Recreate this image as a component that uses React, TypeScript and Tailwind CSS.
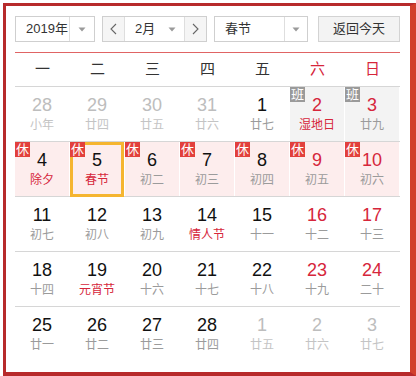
import React from 'react'

type Day = {
  n: number
  lunar: string
  muted?: boolean
  red?: boolean
  lunarRed?: boolean
  tag?: '休' | '班'
  bg?: 'pink' | 'gray'
  selected?: boolean
}

const FONT = { fontFamily: '"Liberation Sans", Arial, "Noto Sans CJK SC", sans-serif' }

const weeks: Day[][] = [
  [
    { n: 28, lunar: '小年', muted: true },
    { n: 29, lunar: '廿四', muted: true },
    { n: 30, lunar: '廿五', muted: true },
    { n: 31, lunar: '廿六', muted: true },
    { n: 1, lunar: '廿七' },
    { n: 2, lunar: '湿地日', red: true, lunarRed: true, tag: '班', bg: 'gray' },
    { n: 3, lunar: '廿九', red: true, tag: '班', bg: 'gray' },
  ],
  [
    { n: 4, lunar: '除夕', lunarRed: true, tag: '休', bg: 'pink' },
    { n: 5, lunar: '春节', lunarRed: true, tag: '休', bg: 'pink', selected: true },
    { n: 6, lunar: '初二', tag: '休', bg: 'pink' },
    { n: 7, lunar: '初三', tag: '休', bg: 'pink' },
    { n: 8, lunar: '初四', tag: '休', bg: 'pink' },
    { n: 9, lunar: '初五', red: true, tag: '休', bg: 'pink' },
    { n: 10, lunar: '初六', red: true, tag: '休', bg: 'pink' },
  ],
  [
    { n: 11, lunar: '初七' },
    { n: 12, lunar: '初八' },
    { n: 13, lunar: '初九' },
    { n: 14, lunar: '情人节', lunarRed: true },
    { n: 15, lunar: '十一' },
    { n: 16, lunar: '十二', red: true },
    { n: 17, lunar: '十三', red: true },
  ],
  [
    { n: 18, lunar: '十四' },
    { n: 19, lunar: '元宵节', lunarRed: true },
    { n: 20, lunar: '十六' },
    { n: 21, lunar: '十七' },
    { n: 22, lunar: '十八' },
    { n: 23, lunar: '十九', red: true },
    { n: 24, lunar: '二十', red: true },
  ],
  [
    { n: 25, lunar: '廿一' },
    { n: 26, lunar: '廿二' },
    { n: 27, lunar: '廿三' },
    { n: 28, lunar: '廿四' },
    { n: 1, lunar: '廿五', muted: true },
    { n: 2, lunar: '廿六', muted: true },
    { n: 3, lunar: '廿七', muted: true },
  ],
]

function Caret() {
  return (
    <svg width="8" height="5" viewBox="0 0 8 5">
      <path d="M0.5 0.5h7L4 4.5z" fill="#9a9a9a" />
    </svg>
  )
}

function Chevron({ dir }: { dir: 'l' | 'r' }) {
  return (
    <svg width="7" height="12" viewBox="0 0 7 12" fill="none">
      <path
        d={dir === 'l' ? 'M6 1L1 6l5 5' : 'M1 1l5 5-5 5'}
        stroke="#666"
        strokeWidth="1.1"
      />
    </svg>
  )
}

function DayCell({ d }: { d: Day }) {
  const bg =
    d.bg === 'pink' ? 'bg-[#fdeded]' : d.bg === 'gray' ? 'bg-[#f3f3f3]' : 'bg-white'
  const numColor = d.muted ? 'text-[#bdbdbd]' : d.red ? 'text-[#d6263b]' : 'text-[#111]'
  const lunarColor = d.lunarRed
    ? 'text-[#d6263b]'
    : d.muted
      ? 'text-[#c4c4c4]'
      : 'text-[#9b9b9b]'
  return (
    <div className={`relative h-[54px] border-r border-white ${bg} flex flex-col items-center`}>
      {/* selection ring sits under the badge */}
      {d.selected && (
        <span className="absolute left-0 top-0 w-[54px] h-[55px] border-[3px] border-[#f5b530]" />
      )}
      {d.tag && (
        <span
          className={`absolute left-0 top-0 w-[15px] h-[15px] text-[13px] leading-[15px] text-white text-center ${
            d.tag === '休' ? 'bg-[#e2403c]' : 'bg-[#9a9a9a]'
          }`}
        >
          {d.tag}
        </span>
      )}
      <span className={`mt-[8px] text-[18px] leading-[20px] ${numColor}`}>{d.n}</span>
      <span className={`mt-[2px] text-[12px] leading-[16px] ${lunarColor}`}>{d.lunar}</span>
    </div>
  )
}

export default function App() {
  return (
    <div className="w-[416px] h-[376px] bg-white pt-[3px] pl-[3px] overflow-hidden" style={FONT}>
      <div className="w-[413px] h-[373px] border-l-[3px] border-t-[3px] border-r-[6px] border-b-[4px] border-[#b72a2b] border-r-[#d2402c] pl-[9px] pr-[10px] pt-[10px]">
        {/* Controls */}
        <div className="flex h-[26px] text-[13px] text-[#333]">
          <div className="flex w-[80px] border border-[#cfcfcf] bg-white">
            <div className="flex-1 flex items-center pl-[10px]">2019年</div>
            <div className="w-[25px] flex items-center justify-center border-l border-[#dedede]">
              <Caret />
            </div>
          </div>

          <div className="flex w-[105px] ml-[7px] border border-[#cfcfcf]">
            <div className="w-[22px] flex items-center justify-center bg-[#f5f5f5] border-r border-[#dedede]">
              <Chevron dir="l" />
            </div>
            <div className="flex-1 flex items-center pl-[10px] pr-[8px] bg-white">
              <span className="flex-1">2月</span>
              <Caret />
            </div>
            <div className="w-[22px] flex items-center justify-center bg-[#f5f5f5] border-l border-[#dedede]">
              <Chevron dir="r" />
            </div>
          </div>

          <div className="flex w-[94px] ml-[7px] border border-[#cfcfcf] bg-white">
            <div className="flex-1 flex items-center pl-[10px]">春节</div>
            <div className="w-[23px] flex items-center justify-center border-l border-[#dedede]">
              <Caret />
            </div>
          </div>

          <div className="w-[82px] ml-[10px] flex items-center justify-center border border-[#d3d3d3] bg-[#f3f3f3] text-[#333]">
            返回今天
          </div>
        </div>

        {/* Red rule */}
        <div className="mt-[10px] h-px bg-[#e06464]" />

        {/* Weekday header */}
        <div className="grid grid-cols-7 h-[34px] border-b border-[#d6d6d6] text-[15px]">
          {['一', '二', '三', '四', '五', '六', '日'].map((w, i) => (
            <div
              key={w}
              className={`flex items-center justify-center ${i >= 5 ? 'text-[#d6263b]' : 'text-[#333]'}`}
            >
              {w}
            </div>
          ))}
        </div>

        {/* Days */}
        {weeks.map((week, wi) => (
          <div
            key={wi}
            className={`grid grid-cols-7 ${wi < weeks.length - 1 ? 'border-b border-[#d6d6d6]' : ''}`}
          >
            {week.map((d, di) => (
              <DayCell key={di} d={d} />
            ))}
          </div>
        ))}
      </div>
    </div>
  )
}
